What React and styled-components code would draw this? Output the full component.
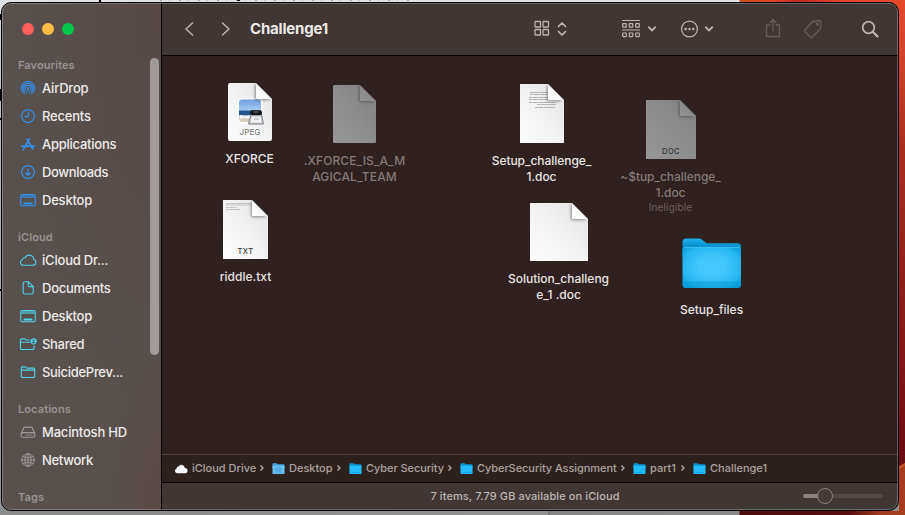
import React from "react";
import styled, { createGlobalStyle } from "styled-components";

const Global = createGlobalStyle`
  * { box-sizing: border-box; }
  html, body { margin: 0; padding: 0; overflow: hidden; }
  body { font-family: Inter, "Liberation Sans", sans-serif; -webkit-font-smoothing: antialiased; }
  svg { display: block; flex: none; }
`;

const Wallpaper = styled.div`
  width: 905px;
  height: 515px;
  padding: 2px 6px 4px 1px;
  overflow: hidden;
  background:
    linear-gradient(#000, #000) 0 14px / 1px 6px no-repeat,
    linear-gradient(#000, #000) 0 89px / 1px 12px no-repeat,
    linear-gradient(#000, #000) 0 118px / 1px 2px no-repeat,
    linear-gradient(#000, #000) 0 289px / 1px 2px no-repeat,
    linear-gradient(#000, #000) 99px 0 / 2px 2px no-repeat,
    linear-gradient(#111, #111) 237px 0 / 3px 1px no-repeat,
    repeating-linear-gradient(90deg, #a5a8aa 0 2px, #dde1e3 2px 9px, #bbb 9px 10px, #dde1e3 10px 19px) 160px 0 / 250px 1px no-repeat,
    linear-gradient(90deg, #8a8a8b 0, #929293 548px, #6a6a6b 549px, #858586 550px, #8a8a8a 739px, #4d0c0d 740px, #5b1010 850px, #a33a20 880px, #a8401f 100%) 0 511px / 905px 4px no-repeat,
    linear-gradient(150deg, transparent 0 5%, #d0602c 8%, #a63b20 14% 100%) 899px 463px / 6px 48px no-repeat,
    linear-gradient(#e5492c 0, #d8432a 50px, #a82e1d 150px, #94241b 250px, #861a18 330px, #7a1215 400px, #6b0d12 450px, #681014 511px) 899px 0 / 6px 511px no-repeat,
    linear-gradient(90deg, #dfe3e5 0 739px, #c5501b 740px, #dc4a25 770px, #b92f28 800px, #e2492c 840px, #e5492c 100%) 0 0 / 905px 12px no-repeat,
    linear-gradient(#d8dcdd 0, #b8babb 130px, #a8aaab 300px, #8d8e8f 515px);
`;

const Window = styled.div`
  position: relative;
  width: 898px;
  height: 509px;
  display: flex;
  border: 1px solid #050303;
  border-radius: 10px;
  overflow: hidden;
  background: #2f211f;
  &::after {
    content: "";
    position: absolute;
    inset: 0;
    border: 1px solid rgba(255, 255, 255, 0.25);
    border-radius: 9px;
    pointer-events: none;
  }
`;

const Sidebar = styled.aside`
  position: relative;
  width: 160px;
  flex: none;
  border-right: 1px solid #070404;
  background:
    radial-gradient(ellipse at 100% 0, #574a48 0, transparent 60%),
    radial-gradient(ellipse at 100% 100%, #5c4a48 0, transparent 22%),
    #57504d;
`;

const Lights = styled.div`
  height: 53px;
  padding: 20px 0 0 20px;
  display: flex;
  gap: 8px;
`;

const Light = styled.i`
  width: 12px;
  height: 12px;
  border-radius: 50%;
  background: ${(p) => p.$color};
`;

const Group = styled.section`
  margin-bottom: 14px;
`;

const GroupTitle = styled.h2`
  margin: 0;
  height: 18px;
  padding-left: 16px;
  font-size: 11px;
  line-height: 18px;
  font-weight: 600;
  letter-spacing: 0.1px;
  color: #989391;
`;

const Place = styled.div`
  height: 28px;
  padding-left: 17px;
  display: flex;
  align-items: center;
  gap: 4px;
  font-size: 13px;
  font-weight: 500;
  line-height: 28px;
  white-space: nowrap;
  color: #edebea;
  letter-spacing: ${(p) => p.$ls || 0}px;
  svg { color: ${(p) => p.$tint}; }
`;

const ScrollThumb = styled.div`
  position: absolute;
  right: 2px;
  top: 55px;
  width: 9px;
  height: 297px;
  border-radius: 5px;
  background: #a09a98;
`;

const Main = styled.main`
  flex: 1;
  min-width: 0;
  display: flex;
  flex-direction: column;
`;

const Toolbar = styled.header`
  height: 53px;
  flex: none;
  display: flex;
  align-items: center;
  background: #403634;
  border-bottom: 1px solid #060303;
  color: #bcb4b1;
`;

const Tool = styled.div`
  margin-left: ${(p) => p.$gap}px;
  opacity: ${(p) => (p.$dim ? 0.3 : 1)};
`;

const FolderTitle = styled.h1`
  margin: 0 0 0 19px;
  width: 80px;
  font-size: 15px;
  font-weight: 700;
  line-height: 20px;
  color: #eceae9;
  letter-spacing: -0.2px;
`;

const Canvas = styled.div`
  position: relative;
  flex: 1;
  background: #2f211f;
`;

const File = styled.figure`
  position: absolute;
  left: ${(p) => p.$x - 60 - 162}px;
  top: ${(p) => p.$y - 56}px;
  width: 120px;
  margin: 0;
  display: flex;
  flex-direction: column;
  align-items: center;
`;

const Thumb = styled.div`
  height: 64px;
  margin-bottom: 7px;
  display: flex;
  align-items: center;
`;

const FileName = styled.figcaption`
  font-size: 12px;
  line-height: 16px;
  font-weight: 500;
  text-align: center;
  white-space: pre;
  letter-spacing: ${(p) => p.$ls || 0}px;
  color: ${(p) => (p.$dim ? "#837b79" : "#e8e5e4")};
`;

const Note = styled.div`
  font-size: 10px;
  line-height: 13px;
  font-weight: 400;
  text-align: center;
  color: #6a605e;
  letter-spacing: 0.15px;
`;

const PathBar = styled.nav`
  height: 28px;
  flex: none;
  padding: 0 0 1px 12px;
  display: flex;
  align-items: center;
  border-top: 1px solid #50423f;
  background: #2d211e;
  font-size: 11px;
  font-weight: 500;
  color: #a9a19e;
`;

const Crumb = styled.span`
  width: ${(p) => p.$w}px;
  display: flex;
  align-items: center;
  white-space: nowrap;
  letter-spacing: ${(p) => p.$ls || 0}px;
  svg:first-child { margin-right: 4px; }
`;

const CrumbArrow = styled.svg`
  margin-left: auto;
  margin-right: 7px;
`;

const StatusBar = styled.footer`
  height: 28px;
  flex: none;
  position: relative;
  display: flex;
  align-items: center;
  justify-content: center;
  padding: 0 10px 2px 0;
  border-top: 1px solid #050303;
  background: #403634;
  font-size: 11px;
  font-weight: 500;
  letter-spacing: 0.1px;
  color: #bdb6b4;
`;

const Slider = styled.div`
  position: absolute;
  right: 15px;
  top: 11px;
  width: 80px;
  height: 4px;
  border-radius: 2px;
  background: linear-gradient(90deg, #8d8482 0 16px, #534947 16px);
`;

const Knob = styled.i`
  position: absolute;
  left: 14px;
  top: -6px;
  width: 16px;
  height: 16px;
  border-radius: 50%;
  border: 1px solid #8f8785;
  background: #443a38;
`;

const Icon = ({ w = 18, h = 18, s = 1.2, children }) => (
  <svg width={w} height={h} viewBox={`0 0 ${w} ${h}`} fill="none" stroke="currentColor" strokeWidth={s} strokeLinecap="round" strokeLinejoin="round">
    {children}
  </svg>
);

const SideIcon = ({ children }) => <Icon w={19} h={18} s={1.1}>{children}</Icon>;

const AirDrop = () => (
  <SideIcon>
    <path d="M5.4 14.7a6.7 6.7 0 1 1 7.2 0" />
    <path d="M5.8 12.7a4.8 4.8 0 1 1 6.4 0" />
    <path d="M6.6 11a3 3 0 1 1 4.8 0" />
    <path d="M9 9.6 7 14.7M9 9.6l2 5.1" strokeWidth=".7" />
    <circle cx="9" cy="9" r="1" fill="currentColor" stroke="none" />
  </SideIcon>
);
const Clock = () => (
  <SideIcon><circle cx="9" cy="9.2" r="6.4" /><path d="M9.3 5v4.6H6" /></SideIcon>
);
const Apps = () => (
  <SideIcon>
    <path d="M8 4.1 13.7 14M10.5 4.1 5.2 12.8M4.6 13.9l-.4.8M2.8 11.3h7.4M12.8 11.3h2.7" strokeWidth="1.6" />
  </SideIcon>
);
const Download = () => (
  <SideIcon><circle cx="9" cy="9" r="6.4" /><path d="M9 5.6v6.6M6.7 10 9 12.3 11.3 10" /></SideIcon>
);
const DesktopIcon = () => (
  <SideIcon>
    <rect x="1.8" y="3.5" width="14.4" height="11.3" rx="1.4" />
    <path d="M2.5 4h13v2h-13z" fill="currentColor" fillOpacity=".55" stroke="none" />
    <path d="M2 6.4h14" strokeWidth=".7" />
    <path d="M4.6 12.5h8.8" strokeWidth="2" strokeLinecap="butt" />
  </SideIcon>
);
const Cloud = () => (
  <SideIcon><path d="M4.3 14.2h9.7a2.9 2.9 0 0 0 .7-5.7A4.5 4.5 0 0 0 6.1 6.8 2.5 2.5 0 0 0 3.2 9 2.7 2.7 0 0 0 4.3 14.2z" /></SideIcon>
);
const DocIcon = () => (
  <SideIcon><path d="M5.4 2.7h4l4.8 4.9v6a1.4 1.4 0 0 1-1.4 1.4H5.6a1.4 1.4 0 0 1-1.4-1.4V4.1a1.4 1.4 0 0 1 1.4-1.4zM9.2 2.9v3.7a1 1 0 0 0 1 1h3.9" /></SideIcon>
);
const FolderLine = () => (
  <SideIcon><path d="M2.3 13.2V5.1a1.2 1.2 0 0 1 1.2-1.2h2.8l1.5 1.2h6.7a1.2 1.2 0 0 1 1.2 1.2v6.9a1.3 1.3 0 0 1-1.3 1.3H3.6a1.3 1.3 0 0 1-1.3-1.3zM2.3 7.1h13.4" /></SideIcon>
);
const SharedIcon = () => (
  <SideIcon>
    <path d="M10.4 5H7L5.7 3.9H2.6A1.2 1.2 0 0 0 1.4 5.1v8.1a1.3 1.3 0 0 0 1.3 1.3h11a1.3 1.3 0 0 0 1.3-1.3v-2.4M1.4 7.2h9.3" />
    <circle cx="14.6" cy="6.3" r="3.1" fill="currentColor" stroke="none" />
    <circle cx="14.6" cy="5.4" r="1" fill="#57504d" stroke="none" />
    <path d="M12.9 8.3c.3-1.7 3.1-1.7 3.4 0z" fill="#57504d" stroke="none" />
  </SideIcon>
);
const Disk = () => (
  <SideIcon>
    <path d="M2.3 10.6 4.6 5a1.4 1.4 0 0 1 1.3-.9h6.2a1.4 1.4 0 0 1 1.3.9l2.3 5.6" />
    <rect x="2.1" y="9.6" width="13.8" height="4.7" rx="1.6" />
    <path d="M6.6 12h7" strokeDasharray="1 .5" strokeLinecap="butt" />
  </SideIcon>
);
const Globe = () => (
  <SideIcon>
    <g strokeWidth=".9">
      <circle cx="9" cy="9" r="6.3" /><ellipse cx="9" cy="9" rx="3.1" ry="6.3" />
      <path d="M9 2.7v12.6M2.7 9h12.6M4 5.6c2.8 1.3 7.2 1.3 10 0M4 12.4c2.8-1.3 7.2-1.3 10 0" />
    </g>
  </SideIcon>
);

const groups = [
  ["Favourites", "#2f95fb", [
    ["AirDrop", AirDrop, -0.2], ["Recents", Clock, -0.2], ["Applications", Apps, -0.25], ["Downloads", Download, -0.35], ["Desktop", DesktopIcon, -0.2],
  ]],
  ["iCloud", "#4cd3ea", [
    ["iCloud Dr...", Cloud, -0.2], ["Documents", DocIcon, -0.25], ["Desktop", DesktopIcon, -0.2], ["Shared", SharedIcon, -0.3], ["SuicidePrev...", FolderLine, -0.3],
  ]],
  ["Locations", "#a29d9b", [["Macintosh HD", Disk, -0.2], ["Network", Globe, -0.3]]],
  ["Tags", "", []],
];

const Page = ({ w, h, fold = 16, dim, tag, round = 0, children }) => {
  const id = `pg${w}${h}${dim ? "d" : ""}${tag || ""}`;
  const f = w - fold;
  const boxH = h + (h % 2);
  const jpeg = tag === "JPEG";
  return (
    <svg width={w} height={boxH} viewBox={`0 0 ${w} ${boxH}`} overflow="visible">
      <defs>
        <linearGradient id={id} x1="0" y1="1" x2="1" y2="0">
          <stop offset="0" stopColor={dim ? "#969696" : "#fcfcfc"} />
          <stop offset=".5" stopColor={dim ? "#8d8d8d" : "#f2f2f2"} />
          <stop offset="1" stopColor={dim ? "#808080" : "#e2e2e2"} />
        </linearGradient>
        <linearGradient id={id + "f"} x1="0" y1="1" x2=".7" y2=".3">
          <stop offset="0" stopColor={dim ? "#929292" : "#fff"} />
          <stop offset=".6" stopColor={dim ? "#8b8b8b" : "#f8f8f8"} />
          <stop offset="1" stopColor={dim ? "#7c7c7c" : "#dcdcdc"} />
        </linearGradient>
        <filter id={id + "s"} x="-50%" y="-50%" width="200%" height="200%"><feGaussianBlur stdDeviation="1.5" /></filter>
        <clipPath id={id + "c"}><path d={`M${round} 0H${f}L${w} ${fold}V${h - round}q0 ${round} ${-round} ${round}H${round}q${-round} 0 ${-round} ${-round}V${round}q0 ${-round} ${round} ${-round}z`} /></clipPath>
      </defs>
      <g clipPath={`url(#${id}c)`}>
        <rect width={w} height={h} fill={`url(#${id})`} />
        {children}
        <path d={`M${f - 1} 3V${fold + 1}H${w - 2}L${f} 0z`} fill="#000" opacity={dim ? 0.32 : 0.42} filter={`url(#${id}s)`} />
        <path d={`M${f} 0V${fold - 1}q0 1 1 1H${w}z`} fill={`url(#${id}f)`} />
      </g>
      {tag && (
        <text x={w / 2} y={jpeg ? 51.5 : 53.5} textAnchor="middle" fontFamily="Inter, sans-serif" fontSize={jpeg ? 8.2 : 7.5} fontWeight={jpeg ? 400 : 500} letterSpacing={jpeg ? 0 : 0.4} fill={jpeg ? "#777" : "#333"}>{tag}</text>
      )}
    </svg>
  );
};

const Photo = () => (
  <g>
    <defs>
      <linearGradient id="sky" x2="0" y2="1"><stop stopColor="#6f9fe0" /><stop offset="1" stopColor="#b3d4f4" /></linearGradient>
    </defs>
    <rect x="9.5" y="15.5" width="25" height="25" rx="4.5" fill="#fff" />
    <path d="M11 30V19.5a3 3 0 0 1 3-3h16a3 3 0 0 1 3 3V30z" fill="url(#sky)" />
    <rect x="11" y="27.5" width="22" height="5" fill="#245391" />
    <path d="M11 32.5h22V36a3 3 0 0 1-3 3H14a3 3 0 0 1-3-3z" fill="#d5cfbe" />
    <path d="m12 32 5 1.5 4-1 3 2-4 1-5-.5-3 1z" fill="#f4f7fa" />
    <path d="M23.5 29.5h9.500l2.500 11.500H20.500z" fill="#d0d2d5" stroke="#777b80" strokeWidth="1" />
    <rect x="22" y="27.3" width="12" height="5" rx="2.2" fill="#15181b" />
    <path d="M24 34h8.500l.8 5.500H23z" fill="#f1f3f5" />
    <path d="m26 37 2-1.8 1.2 1.5 1.5-.8" stroke="#879099" fill="none" strokeWidth=".8" />
    <ellipse cx="28" cy="29" rx="3" ry=".7" fill="#5a6167" />
  </g>
);

const TextRuns = ({ rows, color }) => rows.map(([x, y, w], i) => (
  <path key={i} d={`M${x} ${y}h${w}`} stroke={color} strokeWidth=".9" strokeDasharray="3.3 .3 4.4 .3 2.1 .3" />
));

const BigFolder = () => (
  <svg width="60" height="52" viewBox="0 0 60 52">
    <defs>
      <radialGradient id="bf" cx=".5" cy=".48" r=".62"><stop offset=".35" stopColor="#42c8fc" /><stop offset=".8" stopColor="#26b8f2" /><stop offset="1" stopColor="#0ca4e2" /></radialGradient>
      <linearGradient id="bb" x2="0" y2="1"><stop stopColor="#1bb0e8" /><stop offset=".3" stopColor="#0c9bd8" /><stop offset=".5" stopColor="#0586c0" /></linearGradient>
    </defs>
    <path d="M.5 5A3.5 3.5 0 0 1 4 1.5H16.5c2 0 3 .6 4.3 1.8L23.5 5.4c.8.6 1.5.9 2.6.9H55.5A3.5 3.5 0 0 1 59 9.8V20H.5z" fill="url(#bb)" />
    <path d="M.5 13a3 3 0 0 1 3-3H56a3 3 0 0 1 3 3V47.5a3.5 3.5 0 0 1-3.5 3.5H4A3.5 3.5 0 0 1 .5 47.5z" fill="url(#bf)" />
    <path d="M2 10.4h55.5" stroke="#3fc5f6" strokeWidth=".8" />
    <path d="M.5 45H59" stroke="#0798d2" strokeWidth=".7" />
    <path d="M.5 45.5H59v2a3.5 3.5 0 0 1-3.5 3.5H4A3.5 3.5 0 0 1 .5 47.5z" fill="#0695d0" opacity=".4" />
  </svg>
);

const SmallFolder = ({ glyph }) => (
  <svg width="13" height="13" viewBox="0 0 13 13">
    <path d="M.5 2.2q0-1 1-1h3l1.3 1h5.7q1 0 1 1V6H.5z" fill={glyph ? "#4aa9dc" : "#0a98d5"} />
    <path d="M.5 3.8h12v7.4q0 .8-.8.8H1.3q-.8 0-.8-.8z" fill={glyph ? "#66c1ef" : "#22bcf6"} />
    <path d="M.5 10.6h12" stroke={glyph ? "#55afe0" : "#0fa5e0"} strokeWidth=".8" />
    {glyph && <path d="M4 6h5v3H4zM4 8h5" stroke="#4299cf" strokeWidth=".7" fill="none" />}
  </svg>
);
const SmallCloud = () => (
  <svg width="14" height="13" viewBox="0 0 14 13"><path d="M3 11.3a2.5 2.5 0 0 1-.4-4.8 2.1 2.1 0 0 1 2-2 3.4 3.4 0 0 1 6.300 1.400 2.700 2.700 0 0 1-.2 5.400z" fill="#f5f8fc" /></svg>
);

const files = [
  { name: "XFORCE", x: 249.5, y: 80, icon: <Page w={44} h={58} round={2} tag="JPEG"><Photo /></Page> },
  { name: ".XFORCE_IS_A_M\nAGICAL_TEAM", x: 354.5, y: 82, ls: 0.1, dim: true, icon: <Page w={43} h={58} round={1.5} dim /> },
  { name: "Setup_challenge_\n1.doc", x: 541.5, y: 82, ls: -0.05, icon: <Page w={44} h={59}><TextRuns color="#aaa" rows={[[10, 8.5, 18], [10, 10.5, 17], [9, 13.5, 20], [9, 15.5, 25], [9, 18.5, 27], [17, 20.5, 19], [15, 23.5, 20]]} /></Page> },
  { name: "~$tup_challenge_\n1.doc", x: 670.5, y: 98, ls: -0.05, dim: true, note: "Ineligible", icon: <Page w={50} h={59} dim tag="DOC" /> },
  { name: "riddle.txt", x: 245.5, y: 198, icon: <Page w={45} h={59} tag="TXT"><TextRuns color="#bcbcbc" rows={[[3, 3.5, 26], [3, 5, 26], [3, 7.5, 11], [3, 9.5, 14]]} /></Page> },
  { name: "Solution_challeng\ne_1 .doc", x: 558.5, y: 200, icon: <Page w={58} h={58} /> },
  { name: "Setup_files", x: 711.5, y: 231, icon: <BigFolder /> },
];

const crumbs = [
  ["iCloud Drive", 98, 0, <SmallCloud />],
  ["Desktop", 77, 0, <SmallFolder glyph />],
  ["Cyber Security", 111, -0.07, <SmallFolder />],
  ["CyberSecurity Assignment", 173, -0.07, <SmallFolder />],
  ["part1", 60, 0, <SmallFolder />],
  ["Challenge1", 90, 0, <SmallFolder />],
];

const Chevron = () => <Icon w={10} h={8} s={1.8}><path d="M1.7 2.2 5 5.5 8.3 2.2" /></Icon>;

export default function App() {
  return (
    <>
      <Global />
      <Wallpaper>
        <Window>
          <Sidebar>
            <Lights>
              <Light $color="#ff5f5b" /><Light $color="#ffbc44" /><Light $color="#02c84c" />
            </Lights>
            {groups.map(([title, tint, places]) => (
              <Group key={title}>
                <GroupTitle>{title}</GroupTitle>
                {places.map(([name, Glyph, space]) => (
                  <Place key={name} $tint={tint} $ls={space}><Glyph /><span>{name}</span></Place>
                ))}
              </Group>
            ))}
            <ScrollThumb />
          </Sidebar>
          <Main>
            <Toolbar>
              <Tool $gap={22}><Icon w={10} h={16} s={1.5}><path d="M8.5 2 2 8l6.5 6" /></Icon></Tool>
              <Tool $gap={27}><Icon w={10} h={16} s={1.5}><path d="M1.5 2 8 8l-6.5 6" /></Icon></Tool>
              <FolderTitle>Challenge1</FolderTitle>
              <Tool $gap={203}>
                <Icon w={18} h={18} s={1.3}>
                  <rect x="2" y="1.5" width="5.5" height="5.5" rx=".6" /><rect x="10" y="1.5" width="5.5" height="5.5" rx=".6" />
                  <rect x="2" y="9.5" width="5.5" height="5.5" rx=".6" /><rect x="10" y="9.5" width="5.5" height="5.5" rx=".6" />
                </Icon>
              </Tool>
              <Tool $gap={6}><Icon w={10} h={16} s={1.7}><path d="M1.5 5.5 5 2l3.5 3.5M1.5 10.5 5 14l3.5-3.5" /></Icon></Tool>
              <Tool $gap={54}>
                <Icon w={20} h={20} s={1.2}>
                  <path d="M1.5 1.5h17M1.5 11h17" />
                  <rect x="1.7" y="4.6" width="3.6" height="3.6" rx=".5" /><rect x="8.2" y="4.6" width="3.6" height="3.6" rx=".5" /><rect x="14.7" y="4.6" width="3.6" height="3.6" rx=".5" />
                  <rect x="1.7" y="14" width="3.6" height="3.6" rx=".5" /><rect x="8.2" y="14" width="3.6" height="3.6" rx=".5" /><rect x="14.7" y="14" width="3.6" height="3.6" rx=".5" />
                </Icon>
              </Tool>
              <Tool $gap={6}><Chevron /></Tool>
              <Tool $gap={23}>
                <Icon w={20} h={20} s={1.3}>
                  <circle cx="9.5" cy="10" r="7.9" />
                  <g fill="currentColor" stroke="none"><circle cx="5.7" cy="10" r="1.2" /><circle cx="9.5" cy="10" r="1.2" /><circle cx="13.3" cy="10" r="1.2" /></g>
                </Icon>
              </Tool>
              <Tool $gap={4}><Chevron /></Tool>
              <Tool $gap={50} $dim>
                <Icon w={18} h={22} s={1.3}><path d="M6 7H2.5v11.5h13V7H12M9 13V2M6 4.5l3-3 3 3" /></Icon>
              </Tool>
              <Tool $gap={20} $dim>
                <Icon w={22} h={22} s={1.3}><path d="M11.5 3.5 17 2.5q2 0 2 2l-.5 5.5q0 .8-.7 1.5l-7.3 7.5q-1 1-2 0L3 13.7q-1-1 0-2l7-7.5q.7-.6 1.5-.7z" /><circle cx="15.5" cy="6" r="1" /></Icon>
              </Tool>
              <Tool $gap={37}><Icon w={18} h={18} s={1.8}><circle cx="7.5" cy="7.5" r="5.8" /><path d="m12 12 4.5 4.5" strokeWidth="2.2" /></Icon></Tool>
            </Toolbar>
            <Canvas>
              {files.map((f) => (
                <File key={f.name} $x={f.x} $y={f.y}>
                  <Thumb>{f.icon}</Thumb>
                  <FileName $ls={f.ls} $dim={f.dim}>{f.name}</FileName>
                  {f.note && <Note>{f.note}</Note>}
                </File>
              ))}
            </Canvas>
            <PathBar>
              {crumbs.map(([name, w, ls, icon], i) => (
                <Crumb key={name} $w={w} $ls={ls}>
                  {icon}{name}
                  {i < crumbs.length - 1 && <CrumbArrow width="6" height="8" viewBox="0 0 6 8" fill="none" stroke="#b5adaa" strokeWidth="1.3"><path d="M1.5 1.5 4 4 1.5 6.5" /></CrumbArrow>}
                </Crumb>
              ))}
            </PathBar>
            <StatusBar>
              7 items, 7.79 GB available on iCloud
              <Slider><Knob /></Slider>
            </StatusBar>
          </Main>
        </Window>
      </Wallpaper>
    </>
  );
}
